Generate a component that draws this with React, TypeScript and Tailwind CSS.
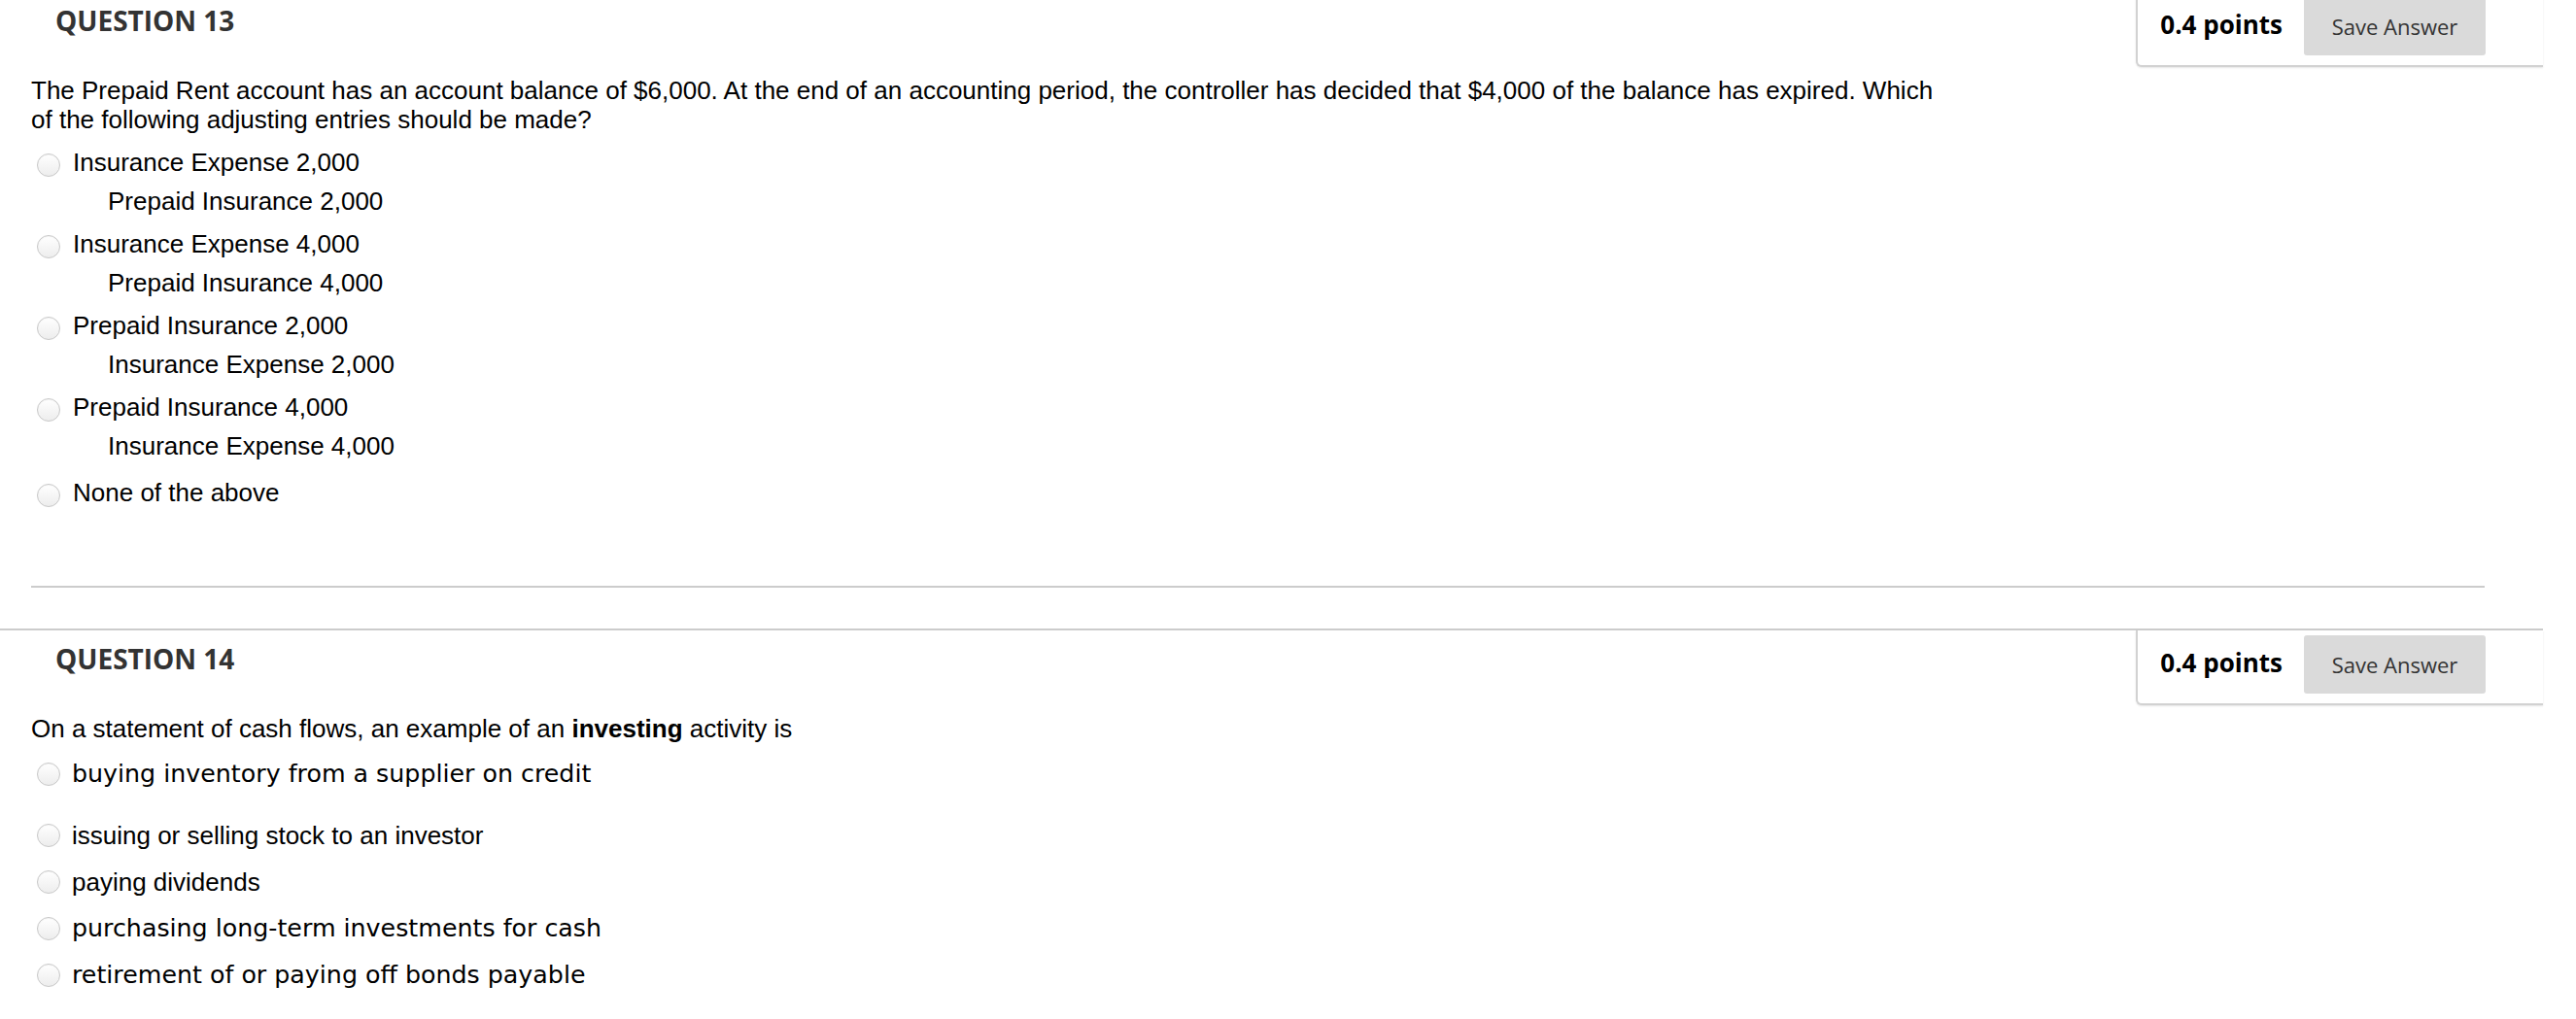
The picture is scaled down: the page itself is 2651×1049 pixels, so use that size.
import React from 'react';

interface PairOption {
  main: string;
  sub?: string;
}

interface LineOption {
  text: string;
  wide?: boolean;
  extraGap?: boolean;
}

const q13Options: PairOption[] = [
  { main: 'Insurance Expense 2,000', sub: 'Prepaid Insurance 2,000' },
  { main: 'Insurance Expense 4,000', sub: 'Prepaid Insurance 4,000' },
  { main: 'Prepaid Insurance 2,000', sub: 'Insurance Expense 2,000' },
  { main: 'Prepaid Insurance 4,000', sub: 'Insurance Expense 4,000' },
  { main: 'None of the above' },
];

const q14Options: LineOption[] = [
  { text: 'buying inventory from a supplier on credit', wide: true, extraGap: true },
  { text: 'issuing or selling stock to an investor' },
  { text: 'paying dividends' },
  { text: 'purchasing long-term investments for cash', wide: true },
  { text: 'retirement of or paying off bonds payable', wide: true },
];

const Radio: React.FC<{ top: string }> = ({ top }) => (
  <span
    className={`block shrink-0 w-[24px] h-[24px] ml-[6px] rounded-full border border-[#c8c8c8] bg-linear-to-b from-white to-[#ededed] shadow-[inset_0_1px_1px_rgba(0,0,0,0.04)] ${top}`}
  />
);

const QuestionHeader: React.FC<{ title: string }> = ({ title }) => (
  <div className="flex items-start justify-between">
    <h2 className="mt-[10px] pl-[57px] text-[28px] leading-[38px] font-bold text-[#333333] font-['Open_Sans',sans-serif]">
      {title}
    </h2>
    {/* points + save box hangs from the section rule */}
    <div className="flex items-start h-[77px] pl-[23px] pr-[59px] pt-[5px] bg-white border-l-2 border-b-2 border-[#d2d2d2] rounded-bl-[6px] shadow-[0_1px_2px_rgba(0,0,0,0.1)] font-['Open_Sans',sans-serif]">
      <span className="mt-[10px] text-[26px] leading-[36px] font-bold text-black">0.4 points</span>
      <button className="ml-[22px] w-[187px] h-[60px] rounded-[3px] bg-[#dadada] text-[22px] text-[#333333]">
        Save Answer
      </button>
    </div>
  </div>
);

export default function App() {
  return (
    <div className="min-h-screen bg-white overflow-hidden">
      <div className="w-[2617px] -mt-[10px] text-black font-['Liberation_Sans',Arial,sans-serif]">
        {/* QUESTION 13 */}
        <section className="border-t-2 border-[#cccccc] pb-[42px]">
          <QuestionHeader title="QUESTION 13" />
          <div className="mt-[9px] pl-[32px] pr-[60px]">
            <p className="text-[26px] leading-[30px]">
              The Prepaid Rent account has an account balance of $6,000. At the end of an accounting period, the controller has decided that $4,000 of the balance has expired. Which
              <br />
              of the following adjusting entries should be made?
            </p>
            <ul className="mt-[9px] flex flex-col gap-[4px]">
              {q13Options.map((o, i) => (
                <li key={i} className={`flex items-start ${o.sub ? '' : 'mt-[4px]'}`}>
                  <Radio top="mt-[11px]" />
                  <label className="ml-[13px] text-[26px] leading-[40px]">
                    <div>{o.main}</div>
                    {o.sub && <div className="pl-[36px]">{o.sub}</div>}
                  </label>
                </li>
              ))}
            </ul>
            <div className="mt-[76px] h-[2px] bg-[#cccccc]" />
          </div>
        </section>

        {/* QUESTION 14 */}
        <section className="border-t-2 border-[#cccccc] pb-[20px]">
          <QuestionHeader title="QUESTION 14" />
          <div className="mt-[9px] pl-[32px] pr-[60px]">
            <p className="text-[26px] leading-[30px]">
              On a statement of cash flows, an example of an <strong className="font-bold">investing</strong> activity is
            </p>
            <ul className="mt-[8px] flex flex-col">
              {q14Options.map((o, i) => (
                <li key={i} className={`flex items-start h-[48px] ${o.extraGap ? 'mb-[15px]' : ''}`}>
                  <Radio top="mt-[12px]" />
                  <label
                    className={
                      o.wide
                        ? "ml-[12px] text-[25.3px] leading-[48px] font-['DejaVu_Sans',Verdana,sans-serif]"
                        : 'ml-[12px] text-[26px] leading-[48px]'
                    }
                  >
                    {o.text}
                  </label>
                </li>
              ))}
            </ul>
          </div>
        </section>
      </div>
    </div>
  );
}
